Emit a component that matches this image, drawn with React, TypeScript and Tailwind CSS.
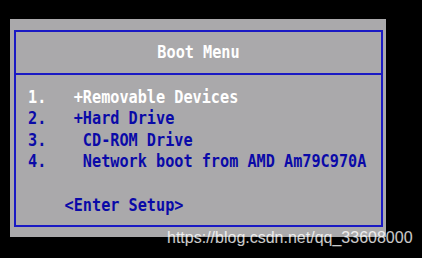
import React from "react";

const mono = { fontFamily: '"DejaVu Sans Mono", "Liberation Mono", monospace' };

function Line({ text, white }: { text: string; white?: boolean }) {
  return (
    <div className="h-[21.4px] flex items-center">
      <span
        className={`inline-block whitespace-pre font-bold text-[15.2px] leading-none [transform:scaleY(1.2)] ${
          white ? "text-white" : "text-[#0a0aa8]"
        }`}
        style={mono}
      >
        {text}
      </span>
    </div>
  );
}

export default function App() {
  return (
    <div className="relative w-[422px] h-[258px] bg-black overflow-hidden pt-[19px] pl-[10px]">
      <div className="w-[376px] h-[218px] bg-[#aaa9ab] pt-[11px] pl-[4px]">
        <div className="w-[369px] h-[197px] border-2 border-[#1a1ac4] flex flex-col">
          <div className="h-[43px] border-b-2 border-[#1a1ac4] flex items-center justify-center">
            <span
              className="inline-block whitespace-pre font-bold text-[15.2px] leading-none [transform:scaleY(1.2)] text-white"
              style={mono}
            >
              Boot Menu
            </span>
          </div>
          <div className="pt-[12px] pl-[12px] flex flex-col">
            <Line text="1.   +Removable Devices" white />
            <Line text="2.   +Hard Drive" />
            <Line text="3.    CD-ROM Drive" />
            <Line text="4.    Network boot from AMD Am79C970A" />
            <div className="h-[21.4px]" />
            <div className="mt-[1px]">
              <Line text="    <Enter Setup>" />
            </div>
          </div>
        </div>
      </div>
      <div
        className="absolute left-[167px] top-[228px] text-[16px] leading-[20px] text-white/80 whitespace-nowrap"
        style={{ fontFamily: '"Liberation Sans", Arial, sans-serif' }}
      >
        https://blog.csdn.net/qq_33608000
      </div>
    </div>
  );
}
